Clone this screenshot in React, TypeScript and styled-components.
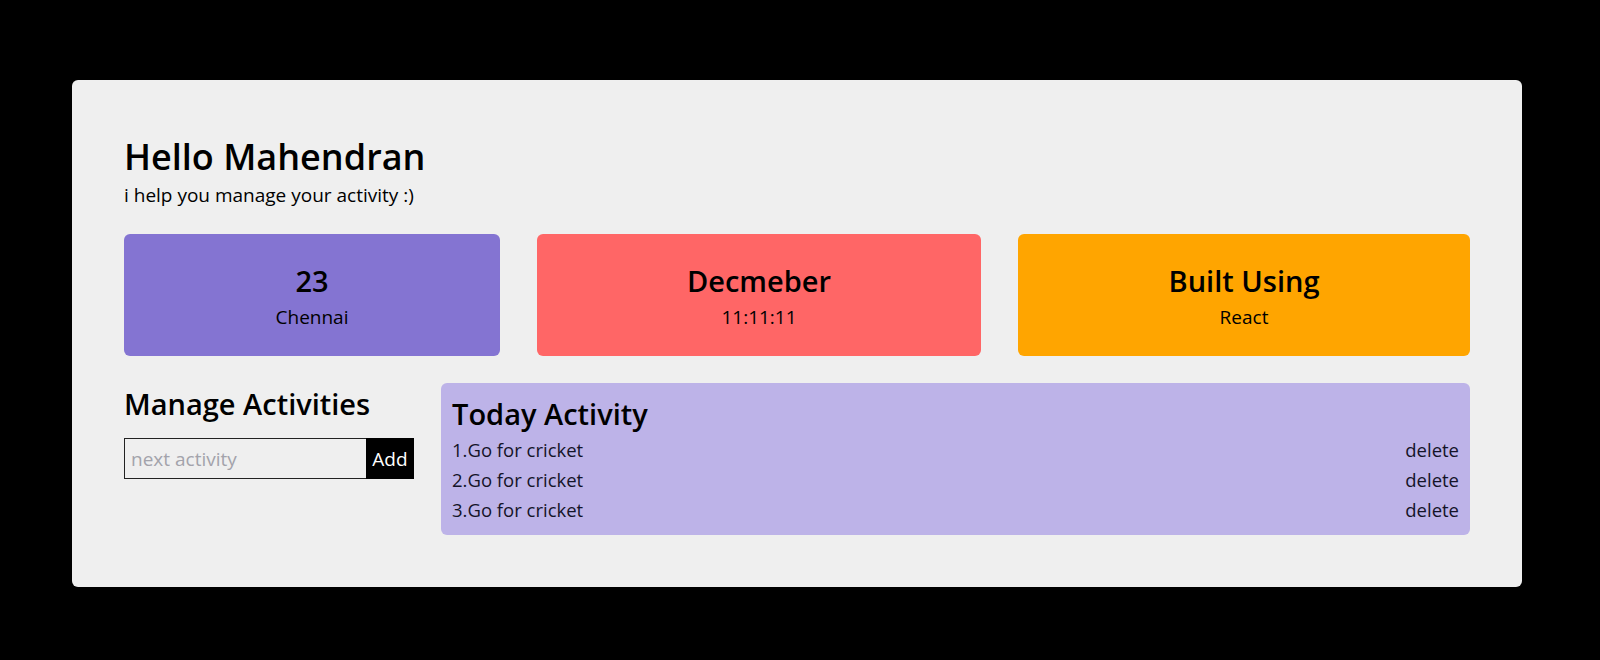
import React, { useState } from 'react';
import styled, { createGlobalStyle } from 'styled-components';

const GlobalStyle = createGlobalStyle`
  html, body {
    margin: 0;
    padding: 0;
    background: #000;
  }
  body {
    font-family: 'Open Sans', 'Noto Sans', sans-serif;
    color: #000;
  }
  * {
    box-sizing: border-box;
  }
`;

const Page = styled.div`
  width: 1600px;
  height: 660px;
  padding: 80px 0 0 72px;
  background: #000;
`;

const Card = styled.main`
  width: 1450px;
  height: 507px;
  padding: 52px;
  background: #efefef;
  border-radius: 6px;
  display: flex;
  flex-direction: column;
`;

const Greeting = styled.h1`
  margin: 1px 0 0 0;
  font-size: 36px;
  line-height: 48px;
  font-weight: 600;
`;

const Tagline = styled.p`
  margin: 2px 0 27px 0;
  font-size: 19px;
  line-height: 24px;
`;

const StatsRow = styled.section`
  display: grid;
  grid-template-columns: 376fr 444fr 452fr;
  column-gap: 37px;
  margin-bottom: 27px;
`;

const StatCard = styled.div<{ $bg: string }>`
  height: 122px;
  background: ${(p) => p.$bg};
  border-radius: 6px;
  display: flex;
  flex-direction: column;
  align-items: center;
  padding-top: 29px;
`;

const StatTitle = styled.div`
  font-size: 29px;
  line-height: 36px;
  font-weight: 600;
`;

const StatSub = styled.div`
  margin-top: 5px;
  font-size: 19px;
  line-height: 26px;
`;

const Bottom = styled.section`
  display: flex;
  gap: 27px;
  align-items: flex-start;
`;

const Manage = styled.div`
  width: 290px;
  flex-shrink: 0;
`;

const SectionTitle = styled.h2`
  margin: 3px 0 0 0;
  font-size: 29px;
  line-height: 36px;
  font-weight: 600;
  white-space: nowrap;
`;

const Form = styled.div`
  display: flex;
  margin-top: 16px;
`;

const Input = styled.input`
  width: 242px;
  height: 41px;
  border: 1px solid #222;
  border-right: none;
  background: #efefef;
  padding: 0 6px;
  font-family: inherit;
  font-size: 19px;
  outline: none;
  &::placeholder {
    color: #a3a3ab;
  }
`;

const AddButton = styled.button`
  width: 49px;
  height: 41px;
  border: none;
  background: #000;
  color: #fff;
  font-family: inherit;
  font-size: 19px;
  padding: 0;
  cursor: pointer;
`;

const ActivityPanel = styled.div`
  flex: 1;
  height: 152px;
  background: #bdb3e8;
  border-radius: 6px;
  padding: 13px 11px 10px;
`;

const PanelTitle = styled.h2`
  margin: 0 0 3px 0;
  font-size: 29px;
  line-height: 36px;
  font-weight: 600;
`;

const ActivityRow = styled.div`
  display: flex;
  justify-content: space-between;
  font-size: 18.5px;
  line-height: 30px;
  color: #141428;
`;

const DeleteLink = styled.span`
  cursor: pointer;
`;

export default function App() {
  const [activities, setActivities] = useState<string[]>([
    'Go for cricket',
    'Go for cricket',
    'Go for cricket',
  ]);
  const [text, setText] = useState('');

  const add = () => {
    if (!text.trim()) return;
    setActivities([...activities, text.trim()]);
    setText('');
  };

  const remove = (i: number) => {
    setActivities(activities.filter((_, idx) => idx !== i));
  };

  return (
    <Page>
      <GlobalStyle />
      <Card>
        <Greeting>Hello Mahendran</Greeting>
        <Tagline>i help you manage your activity :)</Tagline>
        <StatsRow>
          <StatCard $bg="#8474d2">
            <StatTitle>23</StatTitle>
            <StatSub>Chennai</StatSub>
          </StatCard>
          <StatCard $bg="#ff6666">
            <StatTitle>Decmeber</StatTitle>
            <StatSub>11:11:11</StatSub>
          </StatCard>
          <StatCard $bg="#ffa500">
            <StatTitle>Built Using</StatTitle>
            <StatSub>React</StatSub>
          </StatCard>
        </StatsRow>
        <Bottom>
          <Manage>
            <SectionTitle>Manage Activities</SectionTitle>
            <Form>
              <Input
                placeholder="next activity"
                value={text}
                onChange={(e) => setText(e.target.value)}
              />
              <AddButton onClick={add}>Add</AddButton>
            </Form>
          </Manage>
          <ActivityPanel>
            <PanelTitle>Today Activity</PanelTitle>
            {activities.map((a, i) => (
              <ActivityRow key={i}>
                <span>
                  {i + 1}.{a}
                </span>
                <DeleteLink onClick={() => remove(i)}>delete</DeleteLink>
              </ActivityRow>
            ))}
          </ActivityPanel>
        </Bottom>
      </Card>
    </Page>
  );
}
